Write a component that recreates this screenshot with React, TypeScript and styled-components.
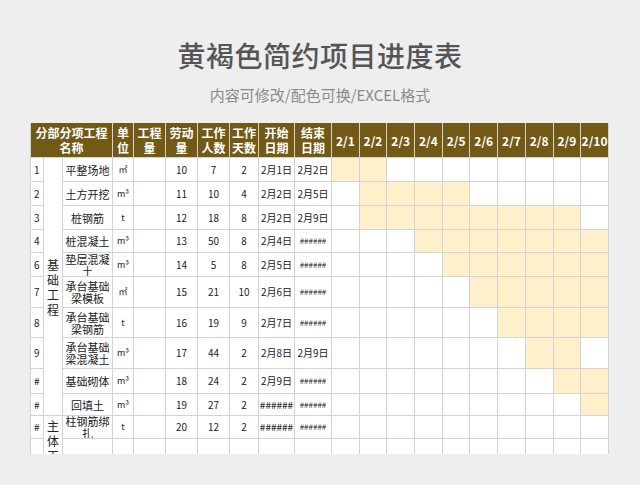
import React from "react";
import styled, { createGlobalStyle } from "styled-components";

const Global = createGlobalStyle`
  html, body { margin: 0; padding: 0; background: #eeeeee; }
  body { font-family: "Noto Sans CJK SC", "Noto Sans", sans-serif; }
`;

const Page = styled.div`
  width: 640px;
  height: 485px;
  overflow: hidden;
  display: flex;
  flex-direction: column;
  align-items: center;
`;

const Title = styled.h1`
  margin: 36px 0 0;
  font-size: 28px;
  line-height: 38px;
  font-weight: 500;
  color: #555;
  letter-spacing: 0.5px;
`;

const Sub = styled.div`
  margin-top: 11px;
  font-size: 15px;
  line-height: 20px;
  color: #8a8a8a;
`;

const Clip = styled.div`
  margin: 18px 0 0 30px;
  width: 579px;
  height: 331px;
  overflow: hidden;
  align-self: flex-start;
`;

const Grid = styled.div`
  display: grid;
  grid-template-columns: 12px 18px 49px 20px 31px 31px 31px 28px 35px 36px repeat(10, 26.7px);
  grid-template-rows: 34px 23px 23px 23px 22px 23px 30px 29px 30px 24px 21px 22px 40px;
  gap: 1px;
  background: #d3d3d3;
  border: 1px solid #d3d3d3;
  border-top: none;
  width: 577px;
`;

const Head = styled.div<{ $span?: number }>`
  grid-column: span ${(p) => p.$span ?? 1};
  background: #735916;
  color: #fff;
  font-weight: 700;
  font-size: 12px;
  line-height: 15px;
  display: flex;
  align-items: center;
  justify-content: center;
  text-align: center;
  white-space: nowrap;
  overflow: hidden;
  min-width: 0;
`;

const Cell = styled.div<{ $align?: string; $size?: number; $wrap?: boolean }>`
  background: #fff;
  color: #222;
  font-size: ${(p) => p.$size ?? 10}px;
  line-height: 12px;
  display: flex;
  align-items: center;
  justify-content: ${(p) => p.$align ?? "center"};
  text-align: center;
  padding: 0 ${(p) => (p.$wrap ? 2 : 0)}px 0 ${(p) => (p.$align ? 3 : p.$wrap ? 2 : 0)}px;
  white-space: ${(p) => (p.$wrap ? "normal" : "nowrap")};
  overflow: hidden;
  min-width: 0;
`;

const Cat = styled.div<{ $rows: number; $top?: number }>`
  grid-row: span ${(p) => p.$rows};
  background: #fff;
  display: flex;
  flex-direction: column;
  align-items: center;
  justify-content: ${(p) => (p.$top ? "flex-start" : "center")};
  padding-top: ${(p) => p.$top ?? 0}px;
  font-size: 12px;
  line-height: 15px;
  color: #222;
`;

const Day = styled.div<{ $on: boolean }>`
  background: ${(p) => (p.$on ? "#fdf0cb" : "#fff")};
`;

type Row = [string, string, string, number, number, number, string, string, number, number];
const rows: Row[] = [
  ["1", "平整场地", "㎡", 10, 7, 2, "2月1日", "2月2日", 1, 2],
  ["2", "土方开挖", "m³", 11, 10, 4, "2月2日", "2月5日", 2, 5],
  ["3", "桩钢筋", "t", 12, 18, 8, "2月2日", "2月9日", 2, 9],
  ["4", "桩混凝土", "m³", 13, 50, 8, "2月4日", "######", 4, 10],
  ["6", "垫层混凝土", "m³", 14, 5, 8, "2月5日", "######", 5, 10],
  ["7", "承台基础梁模板", "㎡", 15, 21, 10, "2月6日", "######", 6, 10],
  ["8", "承台基础梁钢筋", "t", 16, 19, 9, "2月7日", "######", 7, 10],
  ["9", "承台基础梁混凝土", "m³", 17, 44, 2, "2月8日", "2月9日", 8, 9],
  ["#", "基础砌体", "m³", 18, 24, 2, "2月9日", "######", 9, 10],
  ["#", "回填土", "m³", 19, 27, 2, "######", "######", 10, 10],
  ["#", "柱钢筋绑扎", "t", 20, 12, 2, "######", "######", 0, 0],
  ["#", "柱模板", "㎡", 21, 22, 1, "######", "######", 0, 0],
];

const days = Array.from({ length: 10 }, (_, i) => i + 1);

export default function App() {
  return (
    <Page>
      <Global />
      <Title>黄褐色简约项目进度表</Title>
      <Sub>内容可修改/配色可换/EXCEL格式</Sub>
      <Clip>
        <Grid>
          <Head $span={3}>分部分项工程<br />名称</Head>
          <Head>单<br />位</Head>
          <Head>工程<br />量</Head>
          <Head>劳动<br />量</Head>
          <Head>工作<br />人数</Head>
          <Head>工作<br />天数</Head>
          <Head>开始<br />日期</Head>
          <Head>结束<br />日期</Head>
          {days.map((d) => (
            <Head key={d}>2/{d}</Head>
          ))}
          {rows.map((r, i) => (
            <React.Fragment key={i}>
              <Cell $align="flex-start">{r[0]}</Cell>
              {i === 0 && (
                <Cat $rows={10}>
                  {"基础工程".split("").map((c) => <span key={c}>{c}</span>)}
                </Cat>
              )}
              {i === 10 && (
                <Cat $rows={3} $top={2}>
                  {"主体工程".split("").map((c) => <span key={c}>{c}</span>)}
                </Cat>
              )}
              <Cell $size={11} $wrap>{r[1]}</Cell>
              <Cell $size={9}>{r[2]}</Cell>
              <Cell />
              <Cell>{r[3]}</Cell>
              <Cell>{r[4]}</Cell>
              <Cell>{r[5]}</Cell>
              <Cell>{r[6]}</Cell>
              <Cell $size={r[7].startsWith("#") ? 8 : 10}>{r[7]}</Cell>
              {days.map((d) => (
                <Day key={d} $on={r[8] > 0 && d >= r[8] && d <= r[9]} />
              ))}
            </React.Fragment>
          ))}
        </Grid>
      </Clip>
    </Page>
  );
}
